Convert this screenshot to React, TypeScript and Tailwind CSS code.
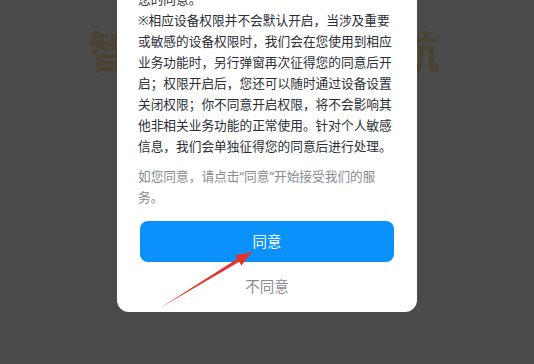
import React from "react";

const font = { fontFamily: '"Noto Sans", "Noto Sans CJK SC", sans-serif' };

export default function App() {
  return (
    <div className="relative h-[364px] w-full overflow-hidden bg-[#4b4b4b]" style={font}>
      {/* page title, dimmed under the overlay */}
      <h1 className="pt-[30px] pr-[6px] text-center text-[44px] leading-[44px] font-bold text-[#4a4334]">
        智能出行语音导航
      </h1>

      {/* privacy dialog */}
      <div className="absolute inset-0 flex flex-col items-center justify-end pb-[52px]">
        <div className="w-[300px] rounded-b-[12px] bg-white">
          <div className="px-[21px]">
            <p className="text-[12.7px] leading-[21px] text-[#2b2e36]">
              为了向您提供导航、定位及语音播报等服务，我们需要获取您的位置信息与麦克风权限。
              <br />
              我们仅在为实现上述功能所必需时，才会征得您的同意。
              <br />
              ※相应设备权限并不会默认开启，当涉及重要或敏感的设备权限时，我们会在您使用到相应业务功能时，另行弹窗再次征得您的同意后开启；权限开启后，您还可以随时通过设备设置关闭权限；你不同意开启权限，将不会影响其他非相关业务功能的正常使用。针对个人敏感信息，我们会单独征得您的同意后进行处理。
            </p>
            <p className="mt-[9px] text-[12.7px] leading-[21px] text-[#868a94]">
              如您同意，请点击“同意”开始接受我们的服务。
            </p>
          </div>
          <div className="mt-[13px] px-[23px]">
            <button className="flex h-[41px] w-full items-center justify-center rounded-[8px] bg-[#0a91fb] text-[14.5px] text-white">
              同意
            </button>
          </div>
          <div className="flex h-[50px] items-center justify-center text-[14.5px] text-[#8a8d94]">
            不同意
          </div>
        </div>
      </div>

      {/* red annotation arrow */}
      <svg className="pointer-events-none absolute inset-0 h-full w-full" viewBox="0 0 534 364">
        <polygon
          points="160,308 239.2,261.8 241.4,265.4 252,252 235.2,255.2 237.4,258.8"
          fill="#e8302a"
        />
      </svg>
    </div>
  );
}
